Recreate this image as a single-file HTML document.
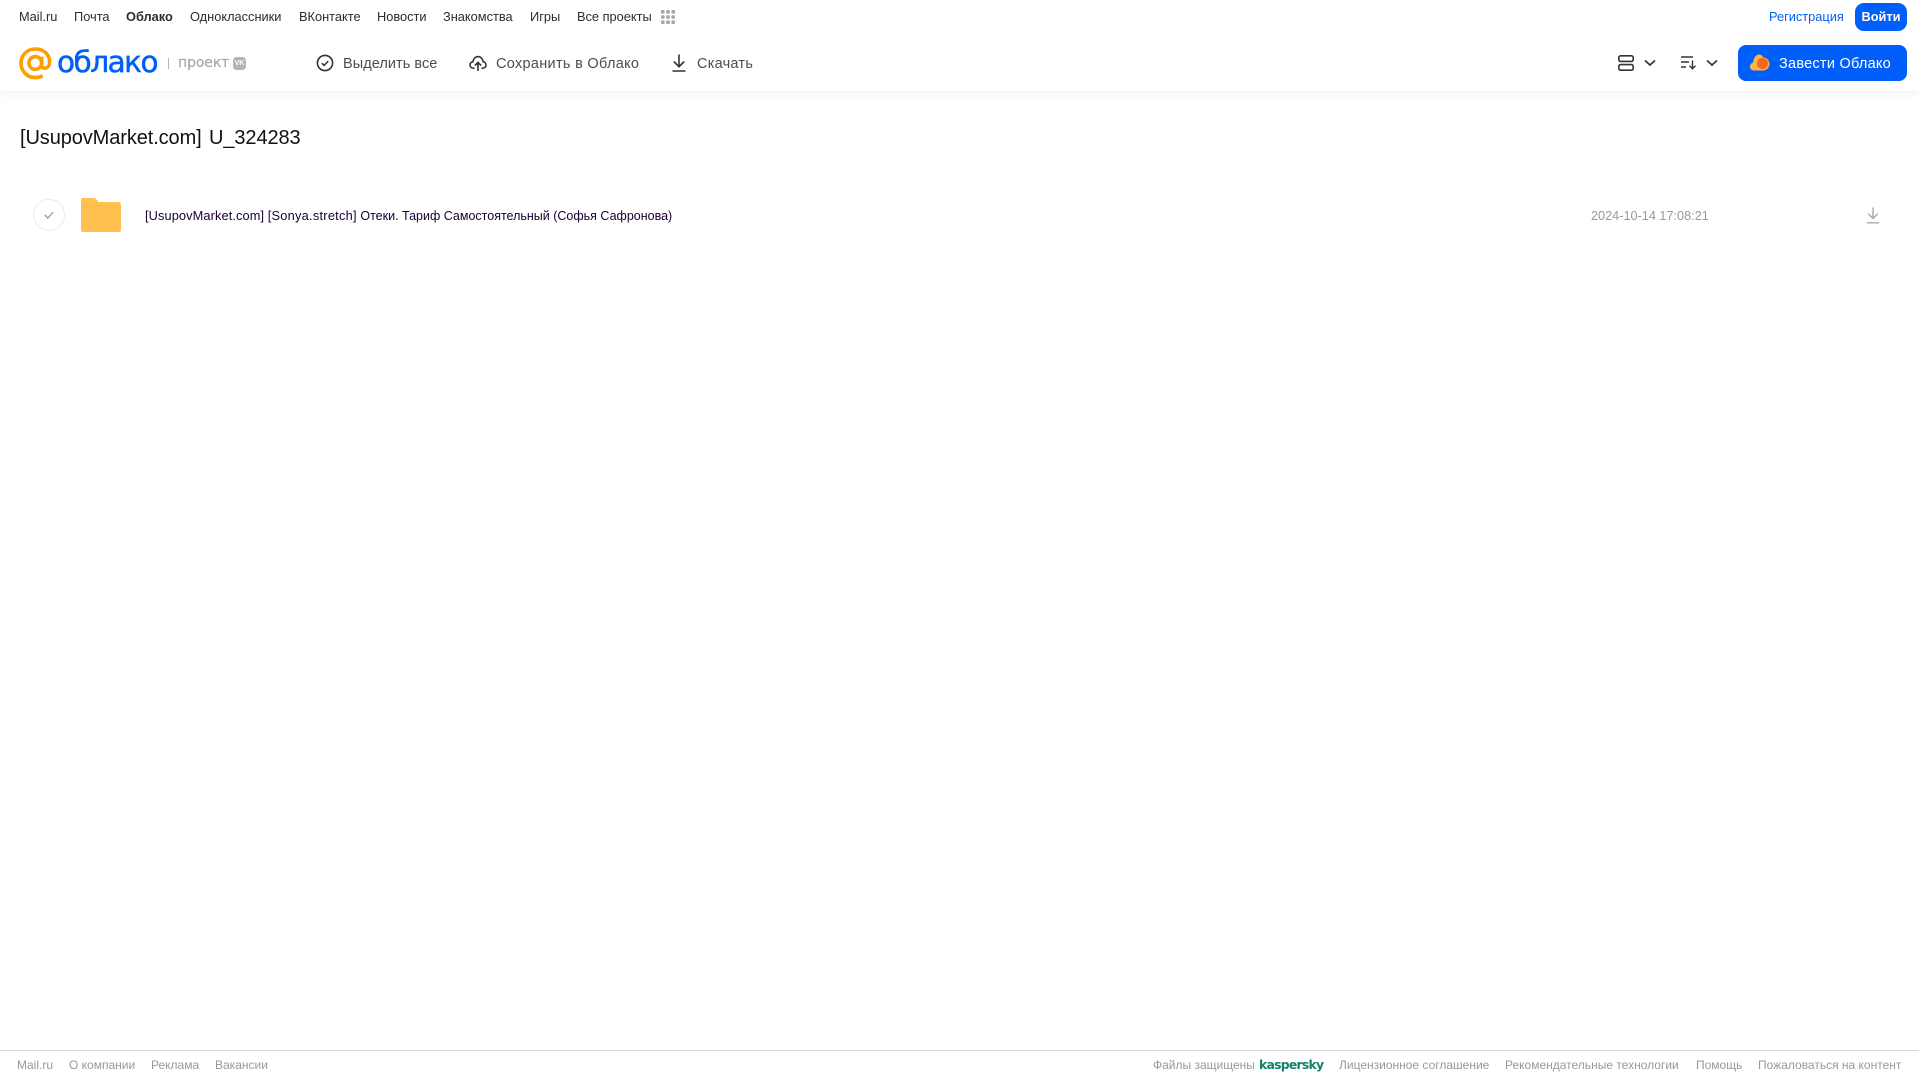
<!DOCTYPE html>
<html lang="ru"><head><meta charset="utf-8"><title>Облако</title>
<style>
html,body{margin:0;padding:0;background:#fff;width:1919px;height:1079px;overflow:hidden}
body{position:relative;font-family:"Liberation Sans",Arial,sans-serif}
.t{position:absolute;white-space:nowrap;line-height:16px}
.n{top:9px;font-size:12.8px;color:#2c2d2e}
.a{top:56px;font-size:14.5px;color:#4c4d4f;letter-spacing:.25px}
.f{top:1057px;font-size:12px;color:#999}
svg{position:absolute;overflow:visible}
#hdr{position:absolute;left:0;top:0;width:1919px;height:91px;background:#fff;box-shadow:0 2px 8px rgba(0,0,0,.07)}
</style></head><body>
<div id="hdr"></div>
<span class="t n" style="left:19px">Mail.ru</span>
<span class="t n" style="left:74px">Почта</span>
<span class="t n" style="left:126px;font-weight:bold">Облако</span>
<span class="t n" style="left:190px">Одноклассники</span>
<span class="t n" style="left:299px">ВКонтакте</span>
<span class="t n" style="left:377px">Новости</span>
<span class="t n" style="left:443px">Знакомства</span>
<span class="t n" style="left:530px">Игры</span>
<span class="t n" style="left:577px">Все проекты</span>
<svg style="left:661px;top:10px" width="14" height="14" fill="#a5a5a5"><rect x="0" y="0" width="3.6" height="3.6" rx="1"/><rect x="5.2" y="0" width="3.6" height="3.6" rx="1"/><rect x="10.4" y="0" width="3.6" height="3.6" rx="1"/><rect x="0" y="5.2" width="3.6" height="3.6" rx="1"/><rect x="5.2" y="5.2" width="3.6" height="3.6" rx="1"/><rect x="10.4" y="5.2" width="3.6" height="3.6" rx="1"/><rect x="0" y="10.4" width="3.6" height="3.6" rx="1"/><rect x="5.2" y="10.4" width="3.6" height="3.6" rx="1"/><rect x="10.4" y="10.4" width="3.6" height="3.6" rx="1"/></svg>
<span class="t n" style="left:1769px;color:#005ff9">Регистрация</span>
<div style="position:absolute;left:1855px;top:3px;width:52px;height:28px;border-radius:9px;background:#005ff9;color:#fff;font-size:12.8px;font-weight:bold;line-height:28px;text-align:center">Войти</div>

<svg style="left:19px;top:47px" width="33" height="33" viewBox="0 0 33 33" fill="none" stroke="#ff9e00" stroke-width="3.6"><circle cx="16.3" cy="16" r="6.4"/><path d="M22.7 9.6v8.6c0 4.2 6.500 4.200 7.700-1.200C31.800 8.200 25 2 16.300 2 8.300 2 2 8.300 2 16.300S8.300 30.600 16.300 30.600c2.900 0 5.100-.6 7.300-1.900"/></svg>
<span class="t" style="left:57px;top:44px;line-height:36px;font-size:29.5px;color:#005ff9;font-family:'DejaVu Sans',sans-serif;letter-spacing:-1.5px;-webkit-text-stroke:.5px #005ff9">облако</span>
<div style="position:absolute;left:168px;top:58px;width:1px;height:11px;background:#b5b5b5"></div>
<span class="t" style="left:178px;top:55px;font-size:14px;color:#a9abae;font-family:'DejaVu Sans',sans-serif;letter-spacing:-.1px;-webkit-text-stroke:.3px #a9abae">проект</span>
<div style="position:absolute;left:233px;top:57px;width:13px;height:13px;border-radius:3.5px;background:#b2b4b7;color:#fff;font-size:7px;font-weight:bold;line-height:13px;text-align:center">VK</div>

<svg style="left:316px;top:54px" width="18" height="18" viewBox="0 0 18 18" fill="none" stroke="#333" stroke-width="1.6"><circle cx="9" cy="9" r="7.6"/><path d="M5.8 9.2l2.3 2.2 4.1-4.2" stroke-width="1.5"/></svg>
<span class="t a" style="left:343px;letter-spacing:.05px">Выделить все</span>
<svg style="left:469px;top:54px" width="18" height="18" viewBox="0 0 18 18" fill="none" stroke="#333" stroke-width="1.6"><path d="M5.5 14.2H4.4C2.3 14.2 1 12.700 1 11c0-1.700 1.200-3 2.900-3.200C4.300 4.900 6.400 2.600 9 2.600s4.800 2.200 5.100 5.100c1.700.2 2.900 1.600 2.900 3.300 0 1.700-1.300 3.200-3.400 3.200h-1.100"/><path d="M9 17V8.500M5.900 11.500L9 8.400l3.100 3.100"/></svg>
<span class="t a" style="left:496px;letter-spacing:.3px">Сохранить в Облако</span>
<svg style="left:671px;top:54px" width="16" height="18" viewBox="0 0 16 18" fill="none" stroke="#333" stroke-width="1.6"><path d="M8 .5V12.500M2.800 7.500L8 12.700l5.200-5.200M1.500 17h13"/></svg>
<span class="t a" style="left:697px">Скачать</span>

<svg style="left:1618px;top:55px" width="16" height="16" viewBox="0 0 16 16" fill="none" stroke="#333" stroke-width="1.6"><rect x=".8" y=".8" width="14.4" height="5.6" rx="1.8"/><rect x=".8" y="9.6" width="14.4" height="5.6" rx="1.8"/></svg>
<svg style="left:1644px;top:59px" width="12" height="8" viewBox="0 0 12 8" fill="none" stroke="#333" stroke-width="1.7"><path d="M1 1.500l5 4.500 5-4.500"/></svg>
<svg style="left:1681px;top:56px" width="16" height="14" viewBox="0 0 16 14" fill="none" stroke="#333" stroke-width="1.4"><path d="M0 1h12M0 6h8M0 11h5M11.500 4.500V12.500M8.500 9.700l3 3 3-3"/></svg>
<svg style="left:1706px;top:59px" width="12" height="8" viewBox="0 0 12 8" fill="none" stroke="#333" stroke-width="1.7"><path d="M1 1.500l5 4.500 5-4.500"/></svg>

<div style="position:absolute;left:1738px;top:45px;width:169px;height:36px;border-radius:8px;background:#005ff9"></div>
<svg style="left:1750px;top:54px" width="20" height="17" viewBox="0 0 20 17"><path d="M4 16.500C1.500 16.500 0 14.700 0 12.500c0-2 1.300-3.500 3-3.900C3.600 3.500 6.500.5 9 .5c2 0 3.500 1.300 4.200 3 3.500 0 6.300 3 6.300 6.500s-3 6.500-6.500 6.500z" fill="#ffb340"/><circle cx="12.500" cy="9.500" r="5.500" fill="#f2691f"/></svg>
<span class="t a" style="left:1779px;color:#fff">Завести Облако</span>

<span class="t" style="left:20px;top:126px;line-height:24px;font-size:20px;color:#111;letter-spacing:-.1px;word-spacing:2px">[UsupovMarket.com] U_324283</span>

<div style="position:absolute;left:33px;top:199px;width:30px;height:30px;border:1px solid #ececec;border-radius:50%"></div>
<svg style="left:44px;top:211px" width="10" height="8" viewBox="0 0 10 8" fill="none" stroke="#999" stroke-width="1.3"><path d="M.8 4l3 3L9.200 1"/></svg>
<svg style="left:81px;top:198px" width="40" height="34" viewBox="0 0 40 34"><path d="M2 0h10c2 0 3 .8 4 2l1.500 2H37c1.700 0 3 1.300 3 3v25c0 1.200-.9 2-2 2H2c-1.100 0-2-.8-2-2V2C0 .8.900 0 2 0z" fill="#ffc14f"/><path d="M0 8h40" stroke="#ffb93f" stroke-width="1"/></svg>
<span class="t" style="left:145px;top:208px;font-size:12.8px;color:#1a0033"><span style="letter-spacing:.1px">[UsupovMarket.com]</span> <span style="letter-spacing:.25px">[Sonya.stretch]</span> <span style="font-size:12.5px">Отеки. Тариф Самостоятельный (Софья Сафронова)</span></span>
<span class="t" style="left:1591px;top:208px;font-size:12.7px;color:#999">2024-10-14 17:08:21</span>
<svg style="left:1866px;top:207px" width="14" height="17" viewBox="0 0 14 17" fill="none" stroke="#a8a8a8" stroke-width="1.4"><path d="M7 .5V11M2.200 6.700L7 11.500l4.800-4.800M.8 15.800h12.400"/></svg>

<div style="position:absolute;left:0;top:1050px;width:1919px;height:1px;background:#d9d9d9"></div>
<span class="t f" style="left:17px">Mail.ru</span>
<span class="t f" style="left:69px">О компании</span>
<span class="t f" style="left:151px">Реклама</span>
<span class="t f" style="left:215px">Вакансии</span>
<span class="t f" style="left:1153px">Файлы защищены</span>
<span class="t f" style="left:1259px;top:1057px;color:#12806a;font-weight:bold;font-size:12.4px;font-family:'DejaVu Sans',sans-serif;letter-spacing:-.75px">kaspersky</span>
<span class="t f" style="left:1339px">Лицензионное соглашение</span>
<span class="t f" style="left:1505px">Рекомендательные технологии</span>
<span class="t f" style="left:1696px">Помощь</span>
<span class="t f" style="left:1758px">Пожаловаться на контент</span>
</body></html>
